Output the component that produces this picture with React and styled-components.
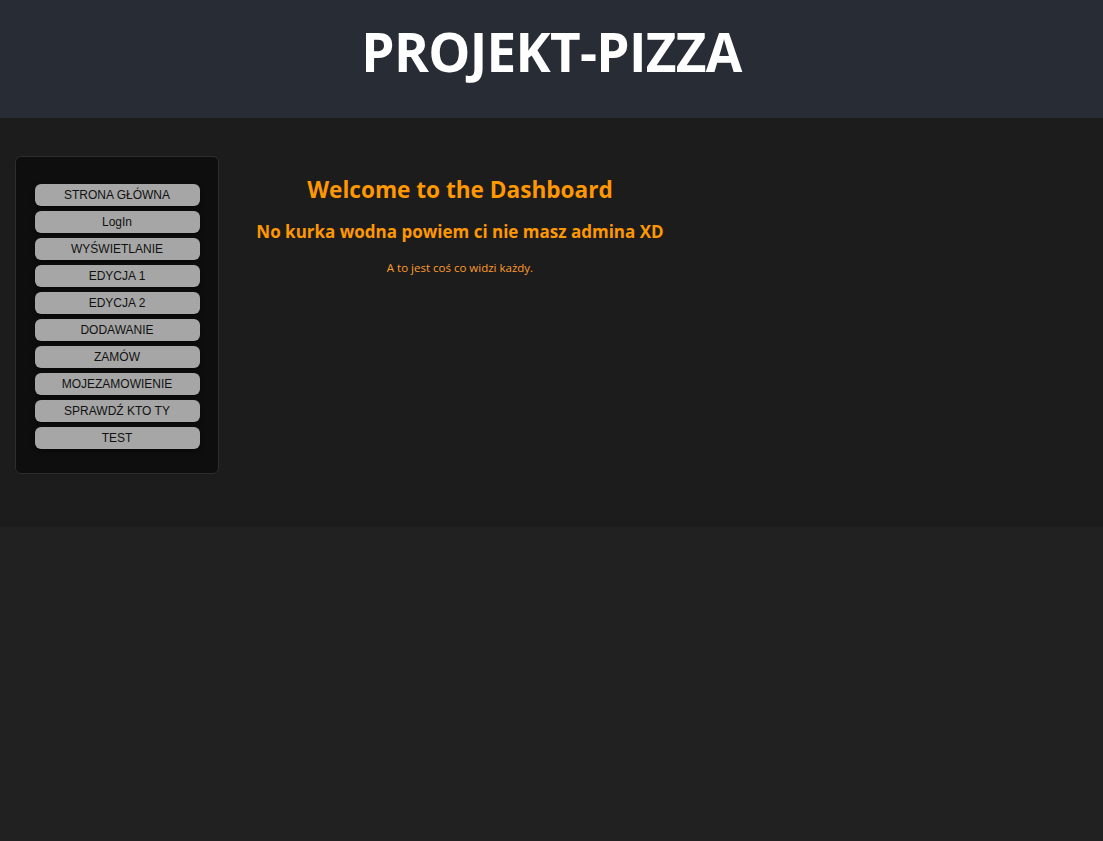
import React from 'react';
import styled, { createGlobalStyle } from 'styled-components';

const GlobalStyle = createGlobalStyle`
  html, body {
    margin: 0;
    padding: 0;
    background: #212121;
    font-family: "Open Sans", "Noto Sans", sans-serif;
  }
`;

const Header = styled.header`
  height: 118px;
  box-sizing: border-box;
  padding-bottom: 16px;
  background: #282c34;
  display: flex;
  align-items: center;
  justify-content: center;
`;

const Title = styled.h1`
  margin: 0;
  color: #ffffff;
  font-size: 53px;
  font-weight: 700;
  line-height: 1;
  letter-spacing: -0.7px;
`;

const Main = styled.main`
  background: #1c1c1c;
  display: flex;
  align-items: flex-start;
  padding: 38px 15px 53px;
`;

const Sidebar = styled.nav`
  width: 202px;
  background: #0e0e0e;
  border: 1px solid #2e2e2e;
  border-radius: 6px;
  padding: 27px 0 24px;
  display: flex;
  flex-direction: column;
  align-items: center;
  gap: 5px;
  box-sizing: content-box;
`;

const NavButton = styled.button`
  width: 165px;
  height: 22px;
  border: none;
  border-radius: 6px;
  background: #a6a6a6;
  color: #111;
  font-family: "Liberation Sans", Arial, sans-serif;
  font-size: 12px;
  padding: 0;
  box-shadow: 0 2px 4px rgba(0, 0, 0, 0.5);
  cursor: pointer;
`;

const Content = styled.section`
  width: 442px;
  margin-left: 20px;
  text-align: center;
  color: #ff9800;
`;

const Welcome = styled.h2`
  margin: 20px 0 0;
  font-size: 22.6px;
  font-weight: 700;
  line-height: 28px;
`;

const Notice = styled.h3`
  margin: 17px 0 0;
  font-size: 17px;
  font-weight: 700;
  line-height: 22px;
`;

const Small = styled.p`
  margin: 17px 0 0;
  font-size: 11.5px;
  color: #ff9b2a;
`;

const links = [
  'STRONA GŁÓWNA',
  'LogIn',
  'WYŚWIETLANIE',
  'EDYCJA 1',
  'EDYCJA 2',
  'DODAWANIE',
  'ZAMÓW',
  'MOJEZAMOWIENIE',
  'SPRAWDŹ KTO TY',
  'TEST',
];

export default function App() {
  return (
    <>
      <GlobalStyle />
      <Header>
        <Title>PROJEKT-PIZZA</Title>
      </Header>
      <Main>
        <Sidebar>
          {links.map(l => (
            <NavButton key={l}>{l}</NavButton>
          ))}
        </Sidebar>
        <Content>
          <Welcome>Welcome to the Dashboard</Welcome>
          <Notice>No kurka wodna powiem ci nie masz admina XD</Notice>
          <Small>A to jest coś co widzi każdy.</Small>
        </Content>
      </Main>
    </>
  );
}
